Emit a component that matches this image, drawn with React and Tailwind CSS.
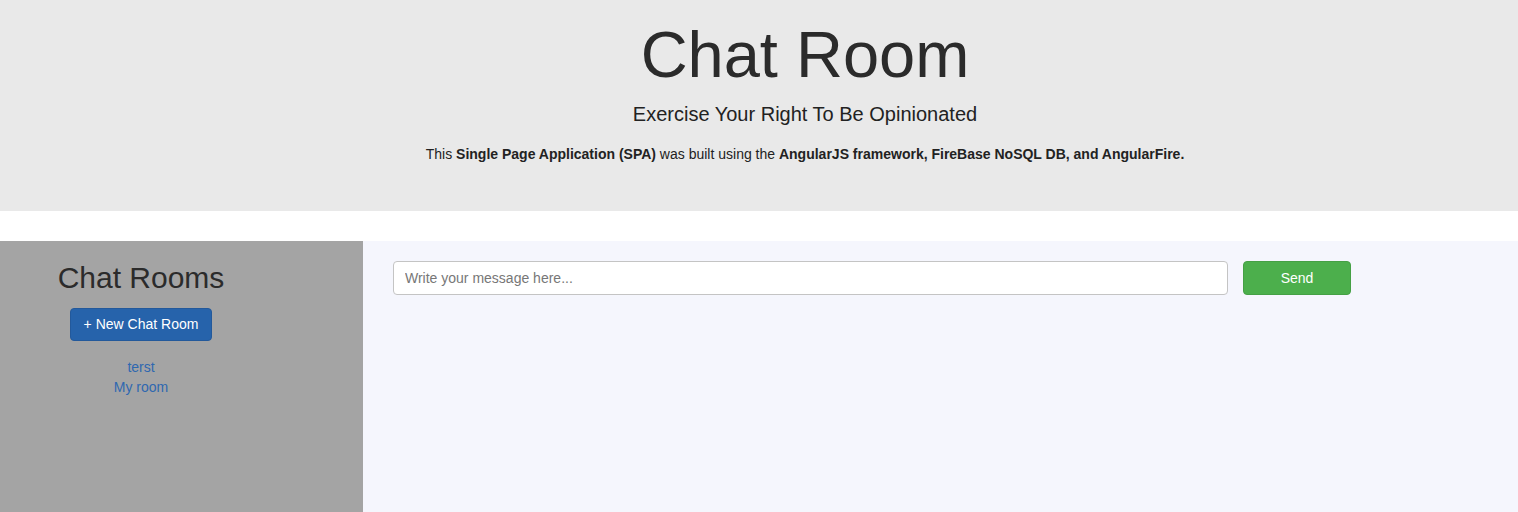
import React, { useState } from 'react';

export default function App() {
    const [message, setMessage] = useState('');
    const rooms = ['terst', 'My room'];

    return (
        <div className="min-h-screen bg-white text-[#333]" style={{ fontFamily: '"Liberation Sans", Arial, sans-serif' }}>
            {/* ジャンボトロン */}
            <div className="h-[211px] bg-[#e9e9e9] pl-[92px] flex flex-col items-center">
                <h1 className="mt-[17px] text-[65px] leading-[76px] text-[#2b2b2b]">Chat Room</h1>
                <p className="mt-[9px] text-[20px] leading-[24px] text-[#222]">Exercise Your Right To Be Opinionated</p>
                <p className="mt-[18px] text-[14px] leading-[20px] text-[#222]">
                    This <b>Single Page Application (SPA)</b> was built using the <b>AngularJS framework, FireBase NoSQL DB, and AngularFire.</b>
                </p>
            </div>

            <div className="mt-[30px] flex h-[271px]">
                {/* サイドバー */}
                <div className="w-[363px] bg-[#a4a4a4]">
                    <div className="w-[282px] flex flex-col items-center">
                        <h3 className="mt-[19px] text-[30px] leading-[36px] text-[#2b2b2b]">Chat Rooms</h3>
                        <button className="mt-[12px] w-[142px] h-[33px] rounded bg-[#2663ab] border border-[#23599b] text-white text-[14px]">
                            + New Chat Room
                        </button>
                        <ul className="mt-[16px] flex flex-col items-center">
                            {rooms.map((r) => (
                                <li key={r} className="text-[14px] leading-[20px]">
                                    <a href="#" className="text-[#2f68b0]">{r}</a>
                                </li>
                            ))}
                        </ul>
                    </div>
                </div>

                {/* メッセージ入力 */}
                <div className="flex-1 bg-[#f5f6fd] pt-[20px] pl-[30px]">
                    <div className="flex gap-[15px]">
                        <input
                            type="text"
                            value={message}
                            onChange={(e) => setMessage(e.target.value)}
                            placeholder="Write your message here..."
                            className="w-[835px] h-[34px] px-[11px] bg-white border border-[#c4c4c4] rounded text-[14px] placeholder:text-[#777] focus:outline-none"
                        />
                        <button className="w-[108px] h-[34px] rounded bg-[#4caf4c] border border-[#45a045] text-white text-[14px]">
                            Send
                        </button>
                    </div>
                </div>
            </div>
        </div>
    );
}
